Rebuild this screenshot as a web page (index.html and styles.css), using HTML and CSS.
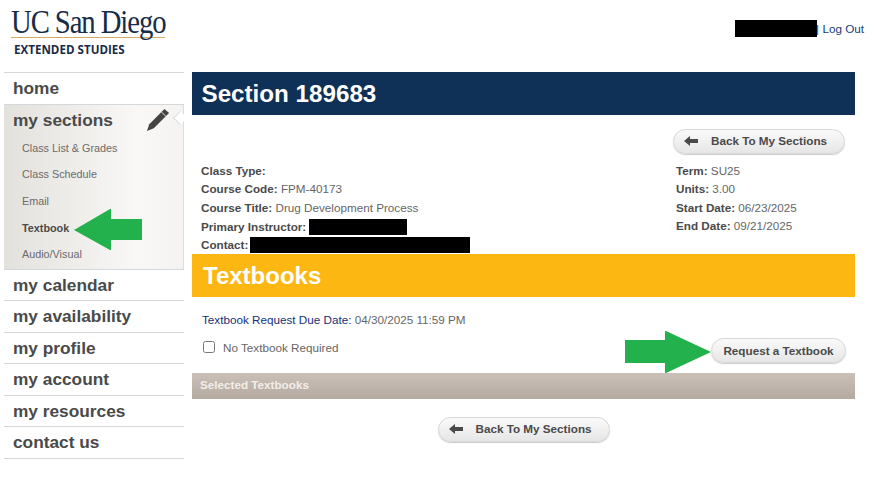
FILE: index.html
```html
<!DOCTYPE html>
<html>

<head>
  <title>Section 189683</title>
  <link rel="stylesheet" href="styles.css">
</head>

<body>

  <header class="top">
    <div class="logo">
      <div class="logo-name"><span>UC San Diego</span></div>
      <div class="logo-sub">EXTENDED STUDIES</div>
    </div>
    <div class="user">
      <span class="redact redact-user"></span><span class="bar">|</span> <a href="#">Log Out</a>
    </div>
  </header>

  <div class="page">
    <nav class="side">
      <a class="nav-link" href="#">home</a>
      <div class="nav-open">
        <a class="nav-link" href="#">my sections</a>
        <svg class="pencil" width="24" height="24" viewBox="0 0 26 26">
          <path d="M20 1 L25 5.5 L8.5 22 L1 25 L3.5 17.5 Z" fill="#444"/>
          <path d="M17 4.5 L21.5 9" stroke="#eee" stroke-width="1" fill="none"/>
        </svg>
        <span class="notch"></span>
        <ul class="sub">
          <li><a href="#">Class List &amp; Grades</a></li>
          <li><a href="#">Class Schedule</a></li>
          <li><a href="#">Email</a></li>
          <li><a class="current" href="#">Textbook</a></li>
          <li><a href="#">Audio/Visual</a></li>
        </ul>
      </div>
      <a class="nav-link" href="#">my calendar</a>
      <a class="nav-link" href="#">my availability</a>
      <a class="nav-link" href="#">my profile</a>
      <a class="nav-link" href="#">my account</a>
      <a class="nav-link" href="#">my resources</a>
      <a class="nav-link" href="#">contact us</a>
    </nav>

    <main class="content">
      <h1 class="title-bar">Section 189683</h1>

      <div class="back-row">
        <a class="btn btn-back" href="#">
          <svg width="14" height="10" viewBox="0 0 14 10"><path d="M0 5 L6 0 V3 H14 V7 H6 V10 Z" fill="#4a4a4a"/></svg>
          <span>Back To My Sections</span>
        </a>
      </div>

      <div class="info">
        <div class="info-left">
          <div class="info-row"><b>Class Type:</b></div>
          <div class="info-row"><b>Course Code:</b> FPM-40173</div>
          <div class="info-row"><b>Course Title:</b> Drug Development Process</div>
          <div class="info-row"><b>Primary Instructor:</b> <span class="redact redact-name"></span></div>
          <div class="info-row"><b>Contact:</b> <span class="redact redact-contact"></span></div>
        </div>
        <div class="info-right">
          <div class="info-row"><b>Term:</b> SU25</div>
          <div class="info-row"><b>Units:</b> 3.00</div>
          <div class="info-row"><b>Start Date:</b> 06/23/2025</div>
          <div class="info-row"><b>End Date:</b> 09/21/2025</div>
        </div>
      </div>

      <h2 class="gold-bar">Textbooks</h2>

      <p class="due"><span class="due-label">Textbook Request Due Date:</span> 04/30/2025 11:59 PM</p>

      <div class="request-row">
        <label class="no-book"><input type="checkbox"> No Textbook Required</label>
        <a class="btn btn-request" href="#">Request a Textbook</a>
      </div>

      <div class="selected-bar">Selected Textbooks</div>

      <div class="bottom-row">
        <a class="btn btn-back" href="#">
          <svg width="14" height="10" viewBox="0 0 14 10"><path d="M0 5 L6 0 V3 H14 V7 H6 V10 Z" fill="#4a4a4a"/></svg>
          <span>Back To My Sections</span>
        </a>
      </div>
    </main>
  </div>

  <!-- annotation arrows drawn over the screenshot -->
  <svg class="arrow arrow-left" width="70" height="42" viewBox="0 0 70 42">
    <path d="M0 21 L36 0 H37 V10 H68 V31 H37 V41 H36 Z" fill="#22b14c"/>
  </svg>
  <svg class="arrow arrow-right" width="86" height="42" viewBox="0 0 86 42">
    <path d="M0 9 H40 V0 H41 L86 21 L41 42 H40 V32 H0 Z" fill="#22b14c"/>
  </svg>

</body>

</html>
```

FILE: styles.css
```css
body {
  margin: 0;
  background: white;
  font-family: "Liberation Sans", Arial, sans-serif;
  font-size: 11.7px;
  color: #666;
}

a {
  text-decoration: none;
}

.top {
  height: 72px;
  display: flex;
  justify-content: space-between;
}

.logo {
  margin: 8px 0 0 11px;
  width: 154px;
}

.logo-name {
  font-family: "Liberation Serif", serif;
  font-size: 33px;
  line-height: 29px;
  letter-spacing: -1.25px;
  color: #182b49;
  border-bottom: 1px solid #d4ad5e;
  white-space: nowrap;
  height: 29px;
}

.logo-name span {
  display: inline-block;
  transform: scaleX(0.87);
  transform-origin: left;
}

.logo-sub {
  margin: 5px 0 0 3px;
  font-family: "Open Sans", sans-serif;
  font-weight: 700;
  font-size: 11.6px;
  line-height: 14px;
  color: #182b49;
  white-space: nowrap;
}

.user {
  margin: 20px 23px 0 0;
  height: 18px;
  line-height: 17px;
}

.user a {
  color: #15407a;
}

.bar {
  color: #15407a;
}

.redact {
  display: inline-block;
  background: black;
  vertical-align: top;
}

.redact-user {
  width: 82px;
  height: 17px;
  margin-right: -1px;
}

.redact-name {
  width: 98px;
  height: 16px;
  margin-top: 2px;
}

.redact-contact {
  width: 220px;
  height: 16px;
  margin: 2px 0 0 -2px;
}

.page {
  display: flex;
  align-items: flex-start;
}

.side {
  width: 180px;
  margin-left: 4px;
  border-top: 1px solid #d5d8da;
  flex: none;
}

.nav-link {
  display: block;
  height: 30.5px;
  padding-left: 9px;
  line-height: 31px;
  font-size: 17.3px;
  font-weight: 700;
  color: #4a4a4a;
  border-bottom: 1px solid #d5d8da;
}

.nav-open {
  position: relative;
  height: 165px;
  background: linear-gradient(to right, #e3e1dc, #f9f8f7 75%, #f4f3f1);
  border-bottom: 1px solid #d5d8da;
  box-shadow: inset -1px 0 0 #ddd;
  box-sizing: border-box;
}

.nav-open .nav-link {
  border-bottom: none;
}

.pencil {
  position: absolute;
  top: 3px;
  right: 14px;
}

.notch {
  position: absolute;
  top: 8px;
  right: -1px;
  width: 9px;
  height: 9px;
  background: white;
  transform: rotate(45deg);
  border-left: 1px solid #ddd;
  border-bottom: 1px solid #ddd;
}

.sub {
  list-style: none;
  margin: -0.4px 0 0;
  padding: 0;
}

.sub li {
  height: 26.7px;
  line-height: 26px;
  padding-left: 18px;
}

.sub a {
  font-size: 10.8px;
  color: #6b6b6b;
}

.sub a.current {
  font-weight: 700;
  color: #4a4a4a;
}

.content {
  width: 663px;
  margin-left: 8px;
  flex: none;
}

.title-bar {
  margin: 0;
  height: 43px;
  padding-left: 9.5px;
  line-height: 43px;
  font-size: 24.2px;
  background: #0f3057;
  color: white;
}

.btn {
  display: flex;
  align-items: center;
  box-sizing: border-box;
  height: 25px;
  border: 1px solid #d8d8d8;
  border-radius: 13px;
  background: linear-gradient(to bottom, #fafafa, #e6e6e6);
  box-shadow: 0 1px 1px #ccc;
  font-size: 11.7px;
  font-weight: 700;
  color: #4a4a4a;
}

.btn-back {
  width: 172px;
  padding: 0 0 2px 10px;
}

.btn-back span {
  margin-left: 13px;
  white-space: nowrap;
}

.back-row {
  display: flex;
  justify-content: flex-end;
  padding: 14px 10px 0 0;
}

.info {
  display: flex;
  justify-content: space-between;
  height: 100px;
  padding: 7px 0 0 9px;
  box-sizing: border-box;
}

.info-right {
  width: 179px;
}

.info-row {
  height: 18.4px;
  line-height: 19px;
  white-space: nowrap;
}

.info-left .info-row:nth-child(4) {
  height: 17.4px;
  padding-top: 1px;
}

.info b {
  color: #4a4a4a;
}

.gold-bar {
  margin: 0;
  height: 43px;
  padding-left: 11px;
  line-height: 43px;
  font-size: 24px;
  background: #fdb713;
  color: white;
}

.due {
  margin: 0;
  padding: 15px 0 0 10px;
  height: 16px;
  line-height: 15px;
}

.due-label {
  color: #15307a;
}

.request-row {
  display: flex;
  justify-content: space-between;
  height: 45px;
  padding: 9px 9px 0 11px;
  box-sizing: border-box;
}

.no-book {
  display: flex;
  align-items: center;
  height: 16px;
  margin-top: 2px;
}

.no-book input {
  width: 12px;
  height: 12px;
  margin: 0 8px 0 0;
}

.btn-request {
  width: 135px;
  justify-content: center;
  padding-bottom: 1px;
  margin-top: 1px;
}

.selected-bar {
  height: 26px;
  padding-left: 8px;
  line-height: 23px;
  font-weight: 700;
  color: #f2eeea;
  background: linear-gradient(to bottom, #cac0b8, #b5aaa0);
}

.bottom-row {
  display: flex;
  justify-content: center;
  padding: 18px 0 0;
}

.arrow {
  position: absolute;
}

.arrow-left {
  left: 74px;
  top: 209px;
}

.arrow-right {
  left: 625px;
  top: 331px;
}
```
